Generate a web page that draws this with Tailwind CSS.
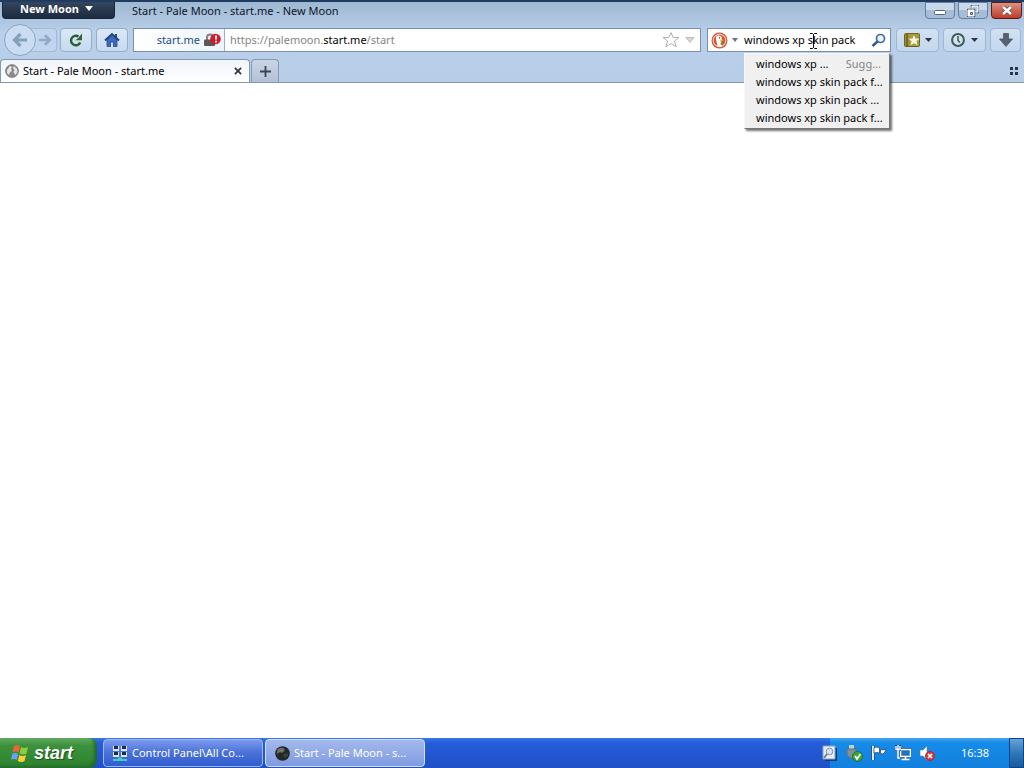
<!DOCTYPE html>
<html lang="en">
<head>
<meta charset="utf-8">
<title>Start - Pale Moon - start.me - New Moon</title>
<script src="https://cdn.jsdelivr.net/npm/@tailwindcss/browser@4"></script>
</head>
<body class="flex min-h-screen flex-col bg-white font-['Noto_Sans','Open_Sans',sans-serif] text-[11px] leading-4 text-[#111827]">

<header class="border-b border-[#8297b0] bg-linear-to-b from-[#9db6d0] via-[#b9d0eb] via-40% to-[#b8cde8]">
  <!-- Title bar -->
  <div class="flex h-6 items-start border-t-2 border-[#1f3b5f]">
    <button class="ml-0.5 flex h-[17px] w-[113px] items-start justify-center gap-1.5 rounded-b-sm border border-t-0 border-[#17273c] bg-linear-to-b from-[#34465d] to-[#1c2b3f] pr-1 text-[11px] font-bold leading-[14px] text-white">New Moon
      <svg class="mt-1 h-[5px] w-2" viewBox="0 0 8 5"><path d="M0 0h8L4 5z" fill="#fff"/></svg>
    </button>
    <h1 class="ml-[17px] flex-1 pt-px text-[#0c1524]">Start - Pale Moon - start.me - New Moon</h1>
    <div class="mr-0.5 flex gap-[3px]">
      <button aria-label="Minimize" class="flex h-[17px] w-[30px] items-center justify-center rounded-b-sm border border-[#64809f] bg-linear-to-b from-[#c9d9eb] from-50% to-[#a6bdd8] to-50%">
        <svg class="mt-1 h-1.5 w-3" viewBox="0 0 12 6"><rect x=".5" y=".5" width="11" height="4" rx="1" fill="#fff" stroke="#59677c"/></svg>
      </button>
      <button aria-label="Restore" class="flex h-[17px] w-[30px] items-center justify-center rounded-b-sm border border-[#64809f] bg-linear-to-b from-[#c9d9eb] from-50% to-[#a6bdd8] to-50%">
        <svg class="h-3 w-3" viewBox="0 0 12 12"><path d="M5 1h6v6H5z" fill="none" stroke="#4e5e77" stroke-width="2.600"/><path d="M5 1h6v6H5z" fill="#b5c8df" stroke="#fff"/><path d="M1 5h6v6H1z" fill="none" stroke="#4e5e77" stroke-width="2.600"/><path d="M1 5h6v6H1z" fill="#fff" stroke="#fff"/><path d="M3.500 7.500h2v2h-2z" fill="#b5c8df" stroke="#4e5e77"/></svg>
      </button>
      <button aria-label="Close" class="flex h-[17px] w-[31px] items-center justify-center rounded-b-sm border border-[#5b1c1c] bg-linear-to-b from-[#dc9184] via-[#cb6554] via-50% to-[#bf3b2b]">
        <svg class="h-[9px] w-3" viewBox="0 0 12 9"><path d="M2 1l8 7M10 1L2 8" stroke="#70424a" stroke-width="4"/><path d="M2 1l8 7M10 1L2 8" stroke="#fff" stroke-width="2.600"/></svg>
      </button>
    </div>
  </div>

  <!-- Navigation bar -->
  <div class="flex h-8 items-center pl-1 pr-[3px]">
    <button aria-label="Back" class="z-10 flex size-8 shrink-0 items-center justify-center rounded-full border border-[#8ca6c5] bg-[#c9dcf2]">
      <svg class="size-4" viewBox="0 0 16 16"><path d="M8.500 2L2.500 8l6 6M3 8h12" fill="none" stroke="#86a0bc" stroke-width="3.200"/></svg>
    </button>
    <button aria-label="Forward" class="-ml-1.5 flex h-6 w-[27px] shrink-0 items-center justify-center rounded-r-sm border border-l-0 border-[#a4bbd6] bg-[#c1d6ee] pl-1">
      <svg class="h-3 w-3.5" viewBox="0 0 16 14"><path d="M8 1.500L13.500 7 8 12.500M13 7H1" fill="none" stroke="#91aac7" stroke-width="3.200"/></svg>
    </button>
    <button aria-label="Reload" class="ml-[3px] flex h-6 w-8 shrink-0 items-center justify-center rounded-sm border border-[#94adca] bg-linear-to-b from-[#dce8f6] to-[#c6daf0]">
      <svg class="size-4" viewBox="0 0 16 16"><path d="M10.500 4.500A4.800 4.800 0 1 0 12.200 10.500" fill="none" stroke="#285f30" stroke-width="2.400"/><path d="M14 1.500v6.800H7.500l3-2.500z" fill="#2d6833"/></svg>
    </button>
    <button aria-label="Home" class="ml-1 flex h-6 w-8 shrink-0 items-center justify-center rounded-sm border border-[#94adca] bg-linear-to-b from-[#dce8f6] to-[#c6daf0]">
      <svg class="size-4" viewBox="0 0 16 16"><path d="M3 8v6.500h3.500V10h3v4.500H13V8L8 3.500z" fill="#3d6bc0" stroke="#27458a" stroke-width=".8"/><path d="M11 2h2v4h-2z" fill="#27458a"/><path d="M1 8.500L8 2l7 6.500" fill="none" stroke="#24417f" stroke-width="2"/></svg>
    </button>

    <div class="ml-[5px] flex h-6 min-w-0 flex-1 items-center border border-[#7890ae] bg-white">
      <button class="flex h-full w-[91px] shrink-0 items-center justify-end gap-1 border-r border-[#9db0c5] bg-linear-to-r from-white to-[#edf4fc] pr-[3px] text-[#244f86]">start.me
        <svg class="h-3.5 w-[17px]" viewBox="0 0 17 14"><path d="M3 8V4.500a3 3 0 0 1 6 0V8" fill="none" stroke="#858585" stroke-width="2"/><rect y="6.500" width="11" height="6.500" rx="1" fill="#5d5757"/><circle cx="11.500" cy="6" r="5.300" fill="#cf1a2b"/><path d="M12 2.500v4M12 7.800v1.700" stroke="#fff" stroke-width="1.800"/></svg>
      </button>
      <div role="textbox" aria-label="Address" contenteditable="true" class="min-w-0 flex-1 truncate pl-[5px] text-[#858585] outline-none">https://palemoon.<span class="text-black">start.me</span>/start</div>
      <button aria-label="Bookmark this page" class="mr-[5px]"><svg class="size-[18px]" viewBox="0 0 18 18"><path d="M9 1.500l2.100 5H17l-4.600 3.600 1.800 5.700L9 12.500l-5.200 3.300 1.800-5.700L1 6.500h5.900z" fill="#fff" stroke="#b0b0b0"/></svg></button>
      <button aria-label="Show history" class="mr-[5px]"><svg class="h-2 w-2.5" viewBox="0 0 12 8"><path d="M1 1h10L6 7z" fill="#d8d8d8" stroke="#b5b5b5"/></svg></button>
    </div>

    <div class="relative ml-1.5 flex h-6 w-[184px] shrink-0 items-center border border-[#7890ae] bg-white">
      <button aria-label="Search engine" class="ml-[3px] flex items-center gap-1">
        <svg class="size-[17px]" viewBox="0 0 17 17"><circle cx="8.500" cy="8.500" r="8" fill="#d4512f"/><circle cx="8.500" cy="8.500" r="6.300" fill="#d9532d" stroke="#fff" stroke-width=".9"/><path d="M6.500 14L5 7.500C4.500 5 5.500 3.500 7.500 3.500c2.500 0 3.500 1.500 3.500 3.500l-1 2.500 1 4.500c-1.500.7-3 .7-4.500 0z" fill="#fff"/><path d="M9 7.500l4 .4-3.500 1.800z" fill="#f3b51e"/><path d="M9.500 11l3-.5-.5 2.500-2.500-.5z" fill="#4a9b46"/><circle cx="8.500" cy="6" r=".7" fill="#35445b"/></svg>
        <svg class="h-1 w-1.5" viewBox="0 0 6 4"><path d="M0 0h6L3 4z" fill="#68717e"/></svg>
      </button>
      <input aria-label="Search" value="windows xp skin pack" class="ml-1.5 min-w-0 flex-1 bg-transparent text-black outline-none">
      <button aria-label="Search" class="mr-1"><svg class="size-[15px]" viewBox="0 0 15 15"><path d="M7 8L1.500 13" stroke="#315f91" stroke-width="2.600"/><circle cx="9.500" cy="5.500" r="4" fill="#edf5fd" stroke="#3d6fa3" stroke-width="1.700"/></svg></button>
      <!-- Text pointer over the query -->
      <svg class="absolute left-[102px] top-1 h-4 w-[7px]" viewBox="0 0 7 16"><path d="M0 .5h2.500l1 1 1-1H7M3.500 1.500v13M0 15.500h2.500l1-1 1 1H7" fill="none" stroke="#000"/></svg>
      <ul role="listbox" aria-label="Search suggestions" class="absolute right-0 top-6 z-20 w-[146px] border border-l-[#f8f8f8] border-t-[#f8f8f8] border-b-[#777] border-r-[#777] bg-[#f0f0f0] pb-px pt-px leading-[18px] text-black shadow-[2px_2px_2px_rgba(0,0,0,0.55)]">
        <li role="option" class="flex justify-between pl-[11px] pr-2"><span>windows xp ...</span><span class="text-[#858585]">Sugg...</span></li>
        <li role="option" class="whitespace-nowrap pl-[11px]">windows xp skin pack f...</li>
        <li role="option" class="whitespace-nowrap pl-[11px]">windows xp skin pack ...</li>
        <li role="option" class="whitespace-nowrap pl-[11px]">windows xp skin pack f...</li>
      </ul>
    </div>

    <button aria-label="Bookmarks" class="ml-[5px] flex h-6 w-[43px] shrink-0 items-center justify-center gap-1 rounded-sm border border-[#9fb6d1] bg-linear-to-b from-[#d3e1f2] to-[#c3d7ee]">
      <svg class="h-3.5 w-[17px]" viewBox="0 0 17 14"><rect x=".5" y=".5" width="15" height="13" rx="1" fill="#a89a3a" stroke="#6f6622"/><path d="M3 1v12" stroke="#756c25" stroke-width="2.500"/><path d="M10 2l1.500 3.500 4 .3-3 2.500 1 4-3.500-2-3.500 2 1-4-3-2.500 4-.3z" fill="#f5f3e6"/></svg>
      <svg class="h-1 w-[7px]" viewBox="0 0 7 4"><path d="M0 0h7L3.500 4z" fill="#26364d"/></svg>
    </button>
    <button aria-label="History" class="ml-1 flex h-6 w-[43px] shrink-0 items-center justify-center gap-1.5 rounded-sm border border-[#9fb6d1] bg-linear-to-b from-[#d3e1f2] to-[#c3d7ee]">
      <svg class="size-3.5" viewBox="0 0 14 14"><circle cx="7" cy="7" r="5.900" fill="#d5e3e9" stroke="#3b5a5c" stroke-width="2"/><path d="M7 3v4.500l2 2" fill="none" stroke="#344f58" stroke-width="1.400"/></svg>
      <svg class="h-1 w-[7px]" viewBox="0 0 7 4"><path d="M0 0h7L3.500 4z" fill="#26364d"/></svg>
    </button>
    <button aria-label="Downloads" class="ml-1 flex h-6 w-[31px] shrink-0 items-center justify-center rounded-sm border border-[#9fb6d1] bg-linear-to-b from-[#d3e1f2] to-[#c3d7ee]">
      <svg class="size-3.5" viewBox="0 0 14 14"><path d="M4.500.5h5V6h4L7 13.500.5 6h4z" fill="#566270" stroke="#46505d" stroke-width=".7"/></svg>
    </button>
  </div>

  <!-- Tab strip -->
  <div class="flex h-[26px] items-end">
    <div class="flex h-[23px] w-[250px] items-center rounded-t border border-b-0 border-[#8499b2] bg-linear-to-b from-[#f0f5fb] to-white pl-1 pr-[7px]">
      <svg class="size-3.5" viewBox="0 0 14 14"><circle cx="7" cy="7" r="6.300" fill="#8c8c8c" stroke="#757575"/><path d="M2 6l3-4 2 1-1 2 1 2-2 1-1 3-2-2zM9 2l3 3 .5 3-2 3-2-3 1-2-1.500-2z" fill="#e6e6e6"/></svg>
      <button role="tab" aria-selected="true" class="ml-1 flex-1 text-left text-black">Start - Pale Moon - start.me</button>
      <button aria-label="Close tab"><svg class="size-2" viewBox="0 0 9 9"><path d="M1 1l7 7M8 1L1 8" stroke="#333" stroke-width="1.900"/></svg></button>
    </div>
    <button aria-label="New tab" class="ml-px flex h-[23px] w-7 items-center justify-center rounded-t border border-b-0 border-[#8499b2] bg-linear-to-b from-[#c9d6e5] to-[#b2c2d5]">
      <svg class="size-[11px]" viewBox="0 0 11 11"><path d="M5.500 0v11M0 5.500h11" stroke="#3b4552" stroke-width="1.800"/></svg>
    </button>
    <button aria-label="Tab groups" class="mb-[7px] ml-auto mr-[5px]"><svg class="h-2 w-[9px]" viewBox="0 0 9 8" fill="#263443"><path d="M0 0h3v3H0zM5 0h3v3H5zM0 5h3v3H0zM5 5h3v3H5z"/></svg></button>
  </div>
</header>

<main class="flex-1 bg-white" aria-label="Page"></main>

<!-- Taskbar -->
<footer class="flex h-[30px] items-stretch bg-linear-to-b from-[#3b78e5] via-[#255ddb] via-15% to-[#1f50c6] text-white">
  <button class="flex w-[97px] items-center gap-1 rounded-r-lg bg-linear-to-b from-[#63a962] via-[#3c923c] via-25% to-[#2d812d] pl-[11px] font-['Liberation_Sans',sans-serif] text-[18px] font-bold italic leading-5 shadow-[inset_-3px_-2px_3px_#226c2b] text-shadow-[1px_1px_1px_#1b4f20]">
    <svg class="size-[19px]" viewBox="0 0 19 19"><path d="M3 2q3-2 6 0L7.500 8.500q-3-2-6 0z" fill="#ee6238"/><path d="M10 3q3 2 7 0l-1.500 6.500q-3 2-7 0z" fill="#8dcc3c"/><path d="M1.200 10q3-2 6 0L5.700 16q-3-2-5.700 0z" fill="#69a2f5"/><path d="M8.300 11q3 2 6.700 0l-1.500 6q-3 2-6.700 0z" fill="#fbd133"/></svg>
    <span>start</span>
  </button>
  <button class="my-px ml-[6px] flex w-[160px] items-center gap-1 rounded-sm border border-[#9eb8ef] bg-linear-to-b from-[#7b9aec] via-[#4970d9] via-50% to-[#315dce] pl-2">
    <svg class="size-4" viewBox="0 0 16 16"><path d="M1 1h6v5H1zM9 1h6v5H9zM1 7h6v5H1zM9 7h6v5H9z" fill="#dbe5f5"/><path d="M2 1h4v3H2zM10 1h4v3h-4zM2 7h4v3H2zM10 7h4v3h-4z" fill="#1a2c4b"/><path d="M1 15h14M6 13.500h4" fill="none" stroke="#42cfc1" stroke-width="2"/></svg>
    <span>Control Panel\All Co...</span>
  </button>
  <button class="my-px ml-[2px] flex w-[160px] items-center gap-1 rounded-sm border border-[#d5e1fb] bg-linear-to-b from-[#a4b8ed] to-[#7f9be1] pl-[9px]">
    <svg class="size-[15px]" viewBox="0 0 15 15"><circle cx="7.500" cy="7.500" r="7.300" fill="#222827"/><path d="M2 5q2-4 6-3l2 2-3 3-2-1-3 2z" fill="#6b746b"/><path d="M8 9l4-2 1 2-3 3z" fill="#3b433e"/></svg>
    <span>Start - Pale Moon - s...</span>
  </button>
  <div class="ml-auto flex items-center gap-2 bg-linear-to-b from-[#43a5f0] via-[#168be8] via-15% to-[#1280dc] pr-5">
    <svg class="-ml-2 h-[17px] w-4" viewBox="0 0 16 17"><path d="M3 3h12v13H3z" fill="#143b79"/><path d="M1 1h12v13H1z" fill="#e3edf5" stroke="#8ea5be"/><circle cx="7.500" cy="6.500" r="3.300" fill="#d3e2f0" stroke="#7995b3"/><path d="M2 13l3-4" stroke="#6985a6" stroke-width="2"/></svg>
    <svg class="size-[17px]" viewBox="0 0 17 17"><path d="M3 0h5v4H3z" fill="#c8cdd0"/><path d="M1 4h9v6l-3 3H4l-3-3z" fill="#848f94" stroke="#5a7080"/><circle cx="11.500" cy="11.500" r="5" fill="#39a73c" stroke="#23732a"/><path d="M9 11l2 3 3.500-5" fill="none" stroke="#fff" stroke-width="1.700"/></svg>
    <svg class="size-4" viewBox="0 0 16 16"><path d="M2 1v14" stroke="#254a77" stroke-width="3.500"/><path d="M2 1v14" stroke="#fff" stroke-width="1.800"/><path d="M3 2.500q3-1 5.500.5v5Q6 7 3 8zM9.500 4.500q3 1 5.500-.5-1 4-3 5l-2.500-.5z" fill="#fff" stroke="#264c78" stroke-width=".8"/></svg>
    <svg class="size-4" viewBox="0 0 16 16"><path d="M5.500 4.500h10v7h-10z" fill="#2473b5" stroke="#143b66" stroke-width="3"/><path d="M5.500 4.500h10v7h-10z" fill="#2473b5" stroke="#fff" stroke-width="1.500"/><path d="M6.500 14.500h8M10.500 12v2" stroke="#fff" stroke-width="1.500"/><path d="M0 0h6v6H0z" fill="#174475"/><path d="M1 1v3.500h4V1M3 0v5M3 5v8h2" fill="none" stroke="#fff" stroke-width="1.400"/></svg>
    <svg class="size-4" viewBox="0 0 16 16"><path d="M1 5h3l4-4v14l-4-4H1z" fill="#fff" stroke="#667f9c" stroke-width=".6"/><circle cx="11" cy="11" r="4.500" fill="#d93b3b" stroke="#b02631"/><path d="M9 9l4 4M13 9l-4 4" stroke="#fff" stroke-width="1.600"/></svg>
    <time class="ml-[18px]">16:38</time>
  </div>
  <button aria-label="Show desktop" class="w-[15px] border border-[#09458a] bg-linear-to-b from-[#66a2d6] via-[#2e78b8] via-50% to-[#175b9f]"></button>
</footer>
</body>
</html>
